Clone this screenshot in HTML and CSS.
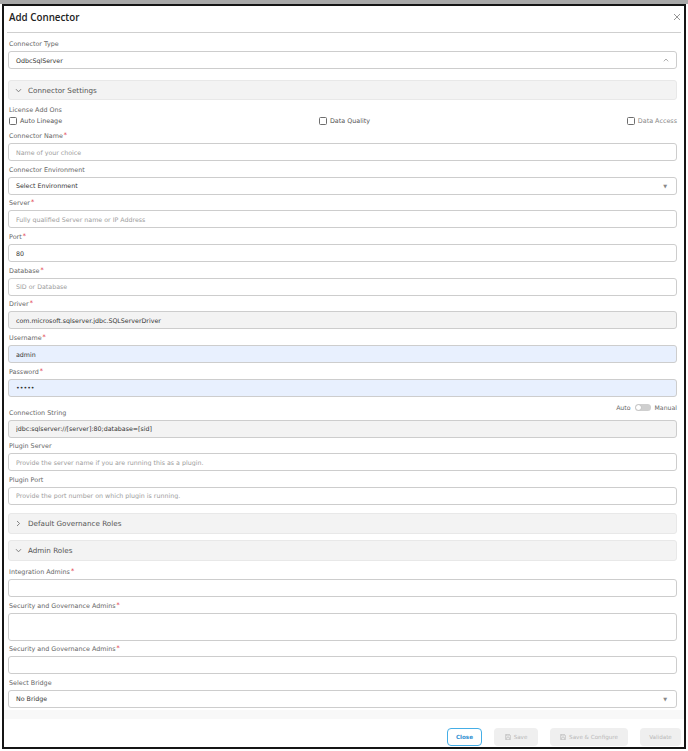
FILE: index.html
```html
<!DOCTYPE html>
<html lang="en">
<head>
  <meta charset="UTF-8" />
  <meta name="viewport" content="width=device-width, initial-scale=1.0"/>
  <title>Add Connector</title>
  <link rel="stylesheet" href="styles.css">
</head>
<body>

  <div class="modal">
    <div class="modal-header">
      <h1 class="modal-title">Add Connector</h1>
      <button class="close-btn" aria-label="Close">
        <svg width="8" height="8" viewBox="0 0 8 8"><path d="M1 1L7 7M7 1L1 7" stroke="#8a8a8a" stroke-width="0.9" fill="none"/></svg>
      </button>
    </div>

    <div class="modal-body">
      <div class="field">
        <label class="field-label">Connector Type</label>
        <div class="input select">
          <span>OdbcSqlServer</span>
          <svg class="caret-up" width="6" height="4" viewBox="0 0 6 4"><path d="M0.8 3.3L3 1L5.2 3.3" stroke="#999" stroke-width="0.8" fill="none"/></svg>
        </div>
      </div>

      <div class="accordion accordion-first">
        <svg class="chevron" width="7" height="5" viewBox="0 0 7 5"><path d="M1 1.2L3.5 3.8L6 1.2" stroke="#777" stroke-width="0.9" fill="none"/></svg>
        <span>Connector Settings</span>
      </div>

      <div class="addons">
        <div class="field-label">License Add Ons</div>
        <div class="addon-row">
          <label class="check"><input type="checkbox"> Auto Lineage</label>
          <label class="check"><input type="checkbox"> Data Quality</label>
          <label class="check check-muted"><input type="checkbox"> Data Access</label>
        </div>
      </div>

      <div class="field">
        <label class="field-label">Connector Name<span class="req">*</span></label>
        <input class="input" type="text" placeholder="Name of your choice">
      </div>
      <div class="field">
        <label class="field-label">Connector Environment</label>
        <div class="input select">
          <span>Select Environment</span>
          <span class="tri">&#9660;</span>
        </div>
      </div>
      <div class="field">
        <label class="field-label">Server<span class="req">*</span></label>
        <input class="input" type="text" placeholder="Fully qualified Server name or IP Address">
      </div>
      <div class="field">
        <label class="field-label">Port<span class="req">*</span></label>
        <input class="input" type="text" value="80">
      </div>
      <div class="field">
        <label class="field-label">Database<span class="req">*</span></label>
        <input class="input" type="text" placeholder="SID or Database">
      </div>
      <div class="field">
        <label class="field-label">Driver<span class="req">*</span></label>
        <input class="input input-readonly" type="text" value="com.microsoft.sqlserver.jdbc.SQLServerDriver" readonly>
      </div>
      <div class="field">
        <label class="field-label">Username<span class="req">*</span></label>
        <input class="input input-filled" type="text" value="admin">
      </div>
      <div class="field">
        <label class="field-label">Password<span class="req">*</span></label>
        <input class="input input-filled" type="password" value="admin">
      </div>

      <div class="field">
        <div class="conn-row">
          <label class="field-label">Connection String</label>
          <div class="mode-switch">
            <span>Auto</span>
            <span class="toggle"><span class="knob"></span></span>
            <span>Manual</span>
          </div>
        </div>
        <input class="input input-readonly" type="text" value="jdbc:sqlserver://[server]:80;database=[sid]" readonly>
      </div>
      <div class="field">
        <label class="field-label">Plugin Server</label>
        <input class="input" type="text" placeholder="Provide the server name if you are running this as a plugin.">
      </div>
      <div class="field">
        <label class="field-label">Plugin Port</label>
        <input class="input" type="text" placeholder="Provide the port number on which plugin is running.">
      </div>

      <div class="accordion accordion-gov">
        <svg class="chevron" width="7" height="7" viewBox="0 0 7 7"><path d="M2 1L4.6 3.5L2 6" stroke="#777" stroke-width="0.9" fill="none"/></svg>
        <span>Default Governance Roles</span>
      </div>
      <div class="accordion accordion-admin">
        <svg class="chevron" width="7" height="5" viewBox="0 0 7 5"><path d="M1 1.2L3.5 3.8L6 1.2" stroke="#777" stroke-width="0.9" fill="none"/></svg>
        <span>Admin Roles</span>
      </div>

      <div class="field">
        <label class="field-label">Integration Admins<span class="req">*</span></label>
        <input class="input" type="text">
      </div>
      <div class="field">
        <label class="field-label">Security and Governance Admins<span class="req">*</span></label>
        <textarea class="input textarea"></textarea>
      </div>
      <div class="field">
        <label class="field-label">Security and Governance Admins<span class="req">*</span></label>
        <input class="input" type="text">
      </div>
      <div class="field">
        <label class="field-label">Select Bridge</label>
        <div class="input select">
          <span>No Bridge</span>
          <span class="tri">&#9660;</span>
        </div>
      </div>
    </div>

    <div class="modal-footer">
      <button class="btn btn-close">Close</button>
      <button class="btn btn-disabled">
        <svg width="6" height="6" viewBox="0 0 6 6"><path d="M0.5 0.5H4.5L5.5 1.5V5.5H0.5Z M1.6 0.5V2H4.2V0.5 M1.5 5.5V3.6H4.5V5.5" stroke="#bbb" stroke-width="0.6" fill="none"/></svg>
        Save
      </button>
      <button class="btn btn-disabled btn-wide">
        <svg width="6" height="6" viewBox="0 0 6 6"><path d="M0.5 0.5H4.5L5.5 1.5V5.5H0.5Z M1.6 0.5V2H4.2V0.5 M1.5 5.5V3.6H4.5V5.5" stroke="#bbb" stroke-width="0.6" fill="none"/></svg>
        Save &amp; Configure
      </button>
      <button class="btn btn-disabled">Validate</button>
    </div>
  </div>

</body>
</html>
```

FILE: styles.css
```css
body {
  margin: 0;
  background-color: #ffffff;
  border-top: 4px solid #a8a8a8;
  font-family: 'DejaVu Sans', 'Noto Sans', sans-serif;
  color: #333;
}
.modal {
  margin: 0 2px;
  height: 745px;
  box-sizing: border-box;
  border: 2px solid #151515;
  background-color: #ffffff;
  display: flex;
  flex-direction: column;
}
.modal-header {
  margin: 0 3px;
  height: 27px;
  box-sizing: border-box;
  border-bottom: 1px solid #cfcfcf;
  display: flex;
  justify-content: space-between;
  align-items: flex-start;
  padding: 5px 0 0 2px;
}
.modal-title {
  margin: 0;
  font-family: 'Open Sans', sans-serif;
  font-size: 9.8px;
  line-height: 14px;
  font-weight: 600;
  color: #222;
}
.close-btn {
  border: none;
  background: none;
  padding: 0;
  margin-top: 2px;
  width: 8px;
  height: 8px;
  display: flex;
}
.modal-body {
  flex: 1;
  padding: 6px 7px 0 4px;
  overflow: hidden;
  background: linear-gradient(to bottom, #fff 0, #fff 677px, #f8f8f8 677px);
}
.field {
  margin-bottom: 3.7px;
}
.field-label {
  display: block;
  font-size: 6.4px;
  line-height: 10px;
  color: #666;
  padding-left: 1px;
  margin-bottom: 2px;
}
.req {
  color: #e0313c;
  margin-left: 1px;
  vertical-align: top;
  line-height: 8px;
}
.input {
  display: flex;
  align-items: center;
  width: 100%;
  height: 18px;
  box-sizing: border-box;
  border: 1px solid #cdcdcd;
  border-radius: 3px;
  padding: 0 7px;
  margin: 0;
  font-family: inherit;
  font-size: 6.3px;
  color: #333;
  background-color: #ffffff;
  outline: none;
}
.input::placeholder {
  color: #9c9c9c;
}
.input-readonly {
  background-color: #f3f3f3;
}
.input-filled {
  background-color: #e8f0fe;
}
.textarea {
  height: 28px;
  resize: none;
}
.select {
  justify-content: space-between;
}
.tri {
  font-size: 5px;
  color: #888;
  margin-right: 2px;
}
.accordion {
  height: 20px;
  box-sizing: border-box;
  background-color: #f3f3f3;
  border: 1px solid #e8e8e8;
  border-radius: 3px;
  display: flex;
  align-items: center;
  padding-left: 6px;
  font-size: 7.2px;
  color: #555;
}
.accordion .chevron {
  margin-right: 6px;
}
.accordion-first {
  margin-top: 11px;
}
.accordion-gov {
  margin-top: 8px;
  height: 21px;
}
.accordion-admin {
  margin-top: 6px;
  height: 21px;
  margin-bottom: 6px;
}
.addons {
  margin-top: 5px;
  margin-bottom: 5px;
}
.addons .field-label {
  margin-bottom: 1px;
}
.addon-row {
  display: flex;
  justify-content: space-between;
  padding-left: 1px;
}
.check {
  display: flex;
  align-items: center;
  gap: 3px;
  font-size: 6.4px;
  line-height: 10px;
  color: #555;
}
.check-muted {
  color: #888;
}
.check input {
  appearance: none;
  width: 8px;
  height: 8px;
  margin: 0;
  border: 1px solid #6e6e6e;
  border-radius: 1.5px;
  background: #fff;
}
.conn-row {
  display: flex;
  justify-content: space-between;
  align-items: flex-end;
  height: 17px;
  margin: 1px 0 2px;
}
.conn-row .field-label {
  margin-bottom: 0;
}
.mode-switch {
  align-self: flex-start;
  display: flex;
  align-items: center;
  gap: 4px;
  font-size: 6.2px;
  line-height: 10px;
  color: #666;
  margin-top: 2px;
}
.toggle {
  width: 16px;
  height: 7px;
  border-radius: 4px;
  background-color: #cfcfcf;
  display: flex;
  align-items: center;
  padding-left: 1px;
  box-sizing: border-box;
}
.knob {
  width: 5px;
  height: 5px;
  border-radius: 50%;
  background-color: #ffffff;
  box-shadow: 0 0 1px rgba(0,0,0,0.3);
}
.modal-footer {
  height: 28px;
  box-sizing: border-box;
  display: flex;
  justify-content: flex-end;
  align-items: flex-end;
  gap: 12px;
  padding: 0 3px 1px 0;
}
.btn {
  height: 18px;
  box-sizing: border-box;
  border-radius: 4px;
  font-family: inherit;
  font-size: 5.6px;
  display: flex;
  align-items: center;
  justify-content: center;
  gap: 3px;
  padding: 0;
}
.btn-close {
  width: 35px;
  border: 1px solid #45aee6;
  background-color: #ffffff;
  color: #2f8fd0;
  font-weight: 700;
}
.btn-disabled {
  width: 44px;
  border: none;
  background-color: #efefef;
  color: #b8b8b8;
}
.btn-wide {
  width: 78px;
}
.btn-disabled:last-child {
  width: 41px;
}
```
